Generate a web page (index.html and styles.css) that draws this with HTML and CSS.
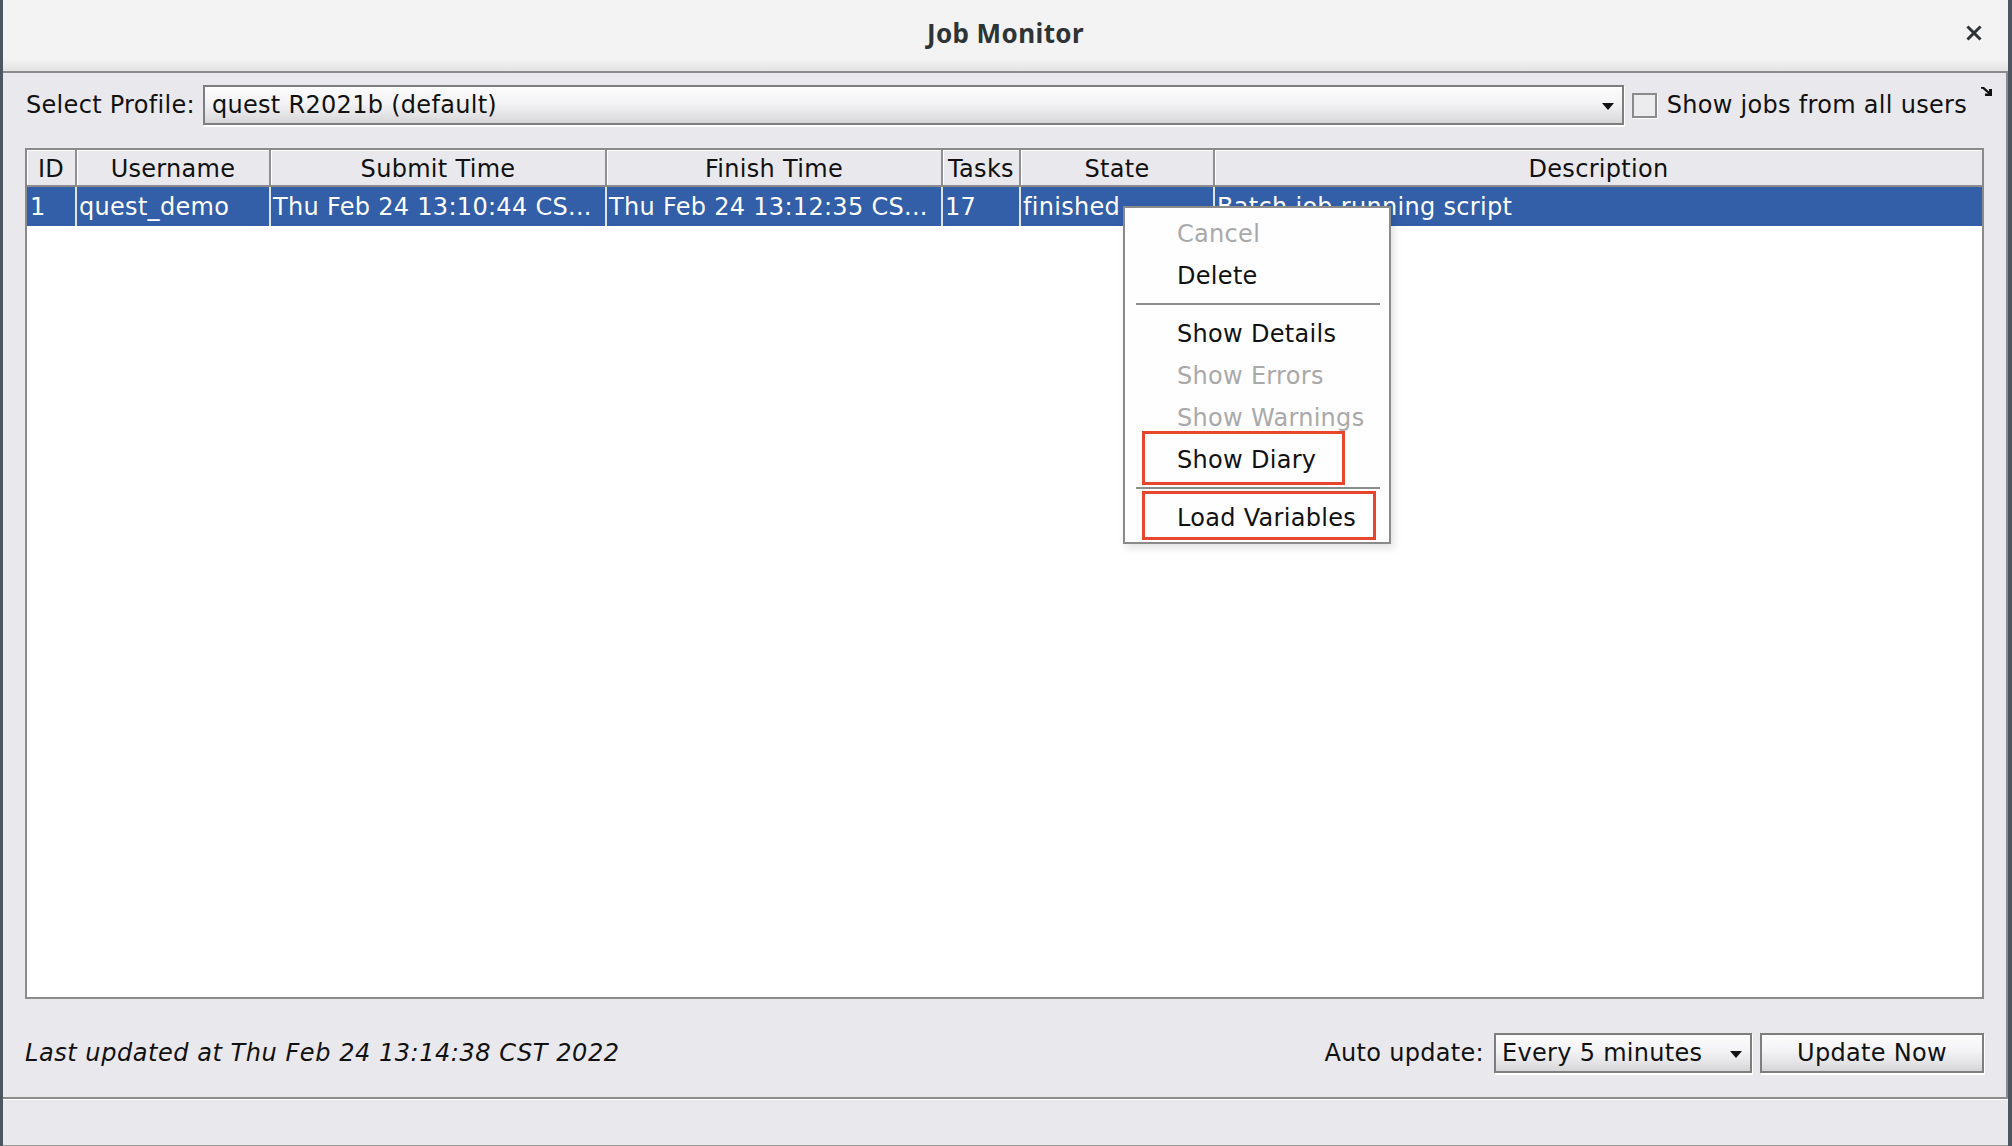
FILE: index.html
```html
<!DOCTYPE html>
<html>
<head>
<meta charset="utf-8">
<title>Job Monitor</title>
<link rel="stylesheet" href="styles.css">
</head>
<body>
<div class="window">
  <header class="titlebar">
    <span class="tb-spacer"></span>
    <h1 class="title">Job Monitor</h1>
    <svg class="close" viewBox="0 0 16 16" aria-label="Close"><path d="M2.5 2.5 L13.5 13.5 M13.5 2.5 L2.5 13.5" stroke="#2e3436" stroke-width="3" stroke-linecap="square" fill="none"/></svg>
  </header>

  <main class="content">
    <svg class="resize-icon" viewBox="0 0 12 9"><path d="M0 0 H3 L8 4.5 V2 H11 V9 H4 V6.5 H7 L1.5 1.8 H0 Z" fill="#111"/></svg>

    <div class="toolbar">
      <span class="lbl lbl-profile">Select Profile:</span>
      <div class="combo combo-profile"><span class="combo-text">quest R2021b (default)</span><span class="arrow"></span></div>
      <span class="checkbox"></span>
      <span class="lbl lbl-all">Show jobs from all users</span>
    </div>

    <div class="table">
      <div class="thead">
        <div class="th">ID</div>
        <div class="th">Username</div>
        <div class="th">Submit Time</div>
        <div class="th">Finish Time</div>
        <div class="th">Tasks</div>
        <div class="th">State</div>
        <div class="th">Description</div>
      </div>
      <div class="tr selected">
        <div class="td first">1</div>
        <div class="td">quest_demo</div>
        <div class="td">Thu Feb 24 13:10:44 CS...</div>
        <div class="td">Thu Feb 24 13:12:35 CS...</div>
        <div class="td">17</div>
        <div class="td">finished</div>
        <div class="td">Batch job running script</div>
      </div>
      <div class="tbody-empty"></div>
    </div>

    <div class="statusbar">
      <span class="updated">Last updated at Thu Feb 24 13:14:38 CST 2022</span>
      <div class="auto">
        <span class="lbl">Auto update:</span>
        <div class="combo combo-auto"><span class="combo-text">Every 5 minutes</span><span class="arrow"></span></div>
        <div class="button">Update Now</div>
      </div>
    </div>
  </main>

  <footer class="bottomstrip"></footer>

  <div class="popup">
    <div class="mi disabled">Cancel</div>
    <div class="mi">Delete</div>
    <div class="sep"></div>
    <div class="mi">Show Details</div>
    <div class="mi disabled">Show Errors</div>
    <div class="mi disabled">Show Warnings</div>
    <div class="mi">Show Diary<span class="annot annot-diary"></span></div>
    <div class="sep"></div>
    <div class="mi">Load Variables<span class="annot annot-load"></span></div>
  </div>
</div>
</body>
</html>
```

FILE: styles.css
```css
* { box-sizing: border-box; }

html, body {
  margin: 0;
  padding: 0;
}

body {
  width: 2012px;
  height: 1146px;
  overflow: hidden;
  background: #4d5560;
  font-family: "DejaVu Sans", "Liberation Sans", sans-serif;
  font-size: 24px;
  letter-spacing: 0.3px;
  color: #111;
}

.window {
  position: relative;
  margin-left: 3px;
  width: 2005px;
  height: 1146px;
  display: flex;
  flex-direction: column;
  background: #e9e8ec;
}

/* Title bar */
.titlebar {
  flex: none;
  height: 73px;
  border-bottom: 2px solid #8c8c8c;
  background: linear-gradient(#f3f3f3 0%, #f3f3f3 82%, #e4e4e4 100%);
  display: grid;
  grid-template-columns: 1fr auto 1fr;
  align-items: center;
}

.title {
  margin: 0;
  font-family: "Noto Sans", "DejaVu Sans", sans-serif;
  font-weight: 700;
  font-size: 26px;
  letter-spacing: 0.4px;
  color: #2e3436;
  padding-bottom: 6px;
}

.close {
  justify-self: end;
  width: 16px;
  height: 16px;
  margin-right: 26px;
  margin-bottom: 6px;
}

/* Content panel */
.content {
  position: relative;
  flex: 1;
  display: flex;
  flex-direction: column;
  padding: 11px 22px 23px 22px;
  border-right: 2px solid #8c8c8c;
  border-bottom: 2px solid #8c8c8c;
  box-shadow: 0 1px 0 #ffffff;
}

.resize-icon {
  position: absolute;
  left: 1978px;
  top: 14px;
  width: 12px;
  height: 9px;
}

.toolbar {
  height: 42px;
  display: flex;
  align-items: center;
  padding-right: 17px;
}

.lbl {
  white-space: nowrap;
}

.lbl-profile {
  padding-left: 1px;
}

.combo {
  height: 40px;
  display: flex;
  align-items: center;
  justify-content: space-between;
  border: 2px solid #7e7e7e;
  box-shadow: 1px 2px 0 #ffffff;
  background: linear-gradient(to bottom, #fcfcfc 0%, #f3f3f5 45%, #e2e2e4 80%, #d6d6d8 100%);
  padding: 0 8px 0 7px;
  white-space: nowrap;
}

.combo-profile {
  flex: 1;
  margin-left: 8px;
}

.arrow {
  width: 0;
  height: 0;
  border-left: 6px solid transparent;
  border-right: 6px solid transparent;
  border-top: 7px solid #111;
  margin-top: 3px;
}

.checkbox {
  width: 25px;
  height: 25px;
  margin-left: 8px;
  border: 2px solid #8a8a8a;
  background: #ececef;
  box-shadow: 1px 1px 0 #ffffff;
}

.lbl-all {
  margin-left: 10px;
}

/* Table */
.table {
  flex: 1;
  margin-top: 22px;
  border: 2px solid #8a8a8a;
  background: #ffffff;
  display: flex;
  flex-direction: column;
}

.thead,
.tr {
  display: grid;
  grid-template-columns: 48px 194px 336px 336px 78px 194px 1fr;
}

.thead {
  height: 37px;
  border-bottom: 2px solid #8c8c8c;
  background: #e9e8ec;
}

.th {
  line-height: 35px;
  padding-top: 2px;
  text-align: center;
  white-space: nowrap;
  overflow: hidden;
  box-shadow: inset 1px 1px 0 #ffffff;
}

.th + .th {
  border-left: 2px solid #8f8f8f;
}

.tr {
  height: 39px;
}

.tr.selected {
  background: #335ea8;
  color: #ffffff;
}

.td {
  line-height: 39px;
  padding-top: 1px;
  padding-left: 2px;
  white-space: nowrap;
  overflow: hidden;
}

.td.first {
  padding-left: 3px;
}

.td + .td {
  border-left: 2px solid #dfe2e9;
}

.tbody-empty {
  flex: 1;
}

/* Status bar */
.statusbar {
  margin-top: 33px;
  height: 42px;
  display: flex;
  align-items: center;
  justify-content: space-between;
}

.updated {
  font-style: italic;
  letter-spacing: 0.55px;
  white-space: nowrap;
}

.auto {
  display: flex;
  align-items: center;
}

.combo-auto {
  width: 258px;
  margin-left: 10px;
  padding-left: 6px;
}

.button {
  width: 224px;
  height: 40px;
  margin-left: 8px;
  border: 2px solid #7e7e7e;
  box-shadow: 1px 2px 0 #ffffff;
  background: linear-gradient(to bottom, #fcfcfc 0%, #f3f3f5 45%, #e2e2e4 80%, #d6d6d8 100%);
  display: flex;
  align-items: center;
  justify-content: center;
  white-space: nowrap;
}

/* Bottom strip */
.bottomstrip {
  flex: none;
  height: 47px;
  border-bottom: 1px solid #9a9a9a;
  background: #e9e8ec;
}

/* Popup menu */
.popup {
  position: absolute;
  left: 1120px;
  top: 206px;
  width: 268px;
  padding: 5px 0 3px 0;
  border: 2px solid #8a8a8a;
  background: #fefefe;
  box-shadow: 3px 4px 8px rgba(0, 0, 0, 0.12);
}

.mi {
  position: relative;
  height: 42px;
  line-height: 42px;
  padding-left: 52px;
  white-space: nowrap;
  color: #111;
}

.mi.disabled {
  color: #a9a9a9;
}

.sep {
  height: 2px;
  margin: 6px 9px 8px 11px;
  background: #8d8d8d;
}

.annot {
  position: absolute;
  left: 17px;
  border: 3px solid #e8452f;
}

.annot-diary {
  top: -8px;
  width: 203px;
  height: 54px;
}

.annot-load {
  top: -6px;
  width: 234px;
  height: 49px;
}
```
